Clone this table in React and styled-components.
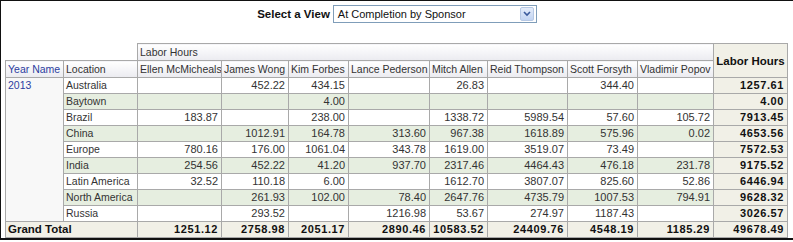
import React from "react";
import styled, { createGlobalStyle } from "styled-components";

const GlobalStyle = createGlobalStyle`
  body {
    margin: 0;
    background: #fff;
    font-family: "Liberation Sans", Arial, sans-serif;
  }
`;

const people = [
  "Ellen McMicheals",
  "James Wong",
  "Kim Forbes",
  "Lance Pederson",
  "Mitch Allen",
  "Reid Thompson",
  "Scott Forsyth",
  "Vladimir Popov",
];

const colWidths = [58, 74, 84, 67, 60, 81, 58, 80, 70, 76, 74];

const rows = [
  ["Australia", ["", "452.22", "434.15", "", "26.83", "", "344.40", ""], "1257.61"],
  ["Baytown", ["", "", "4.00", "", "", "", "", ""], "4.00"],
  ["Brazil", ["183.87", "", "238.00", "", "1338.72", "5989.54", "57.60", "105.72"], "7913.45"],
  ["China", ["", "1012.91", "164.78", "313.60", "967.38", "1618.89", "575.96", "0.02"], "4653.56"],
  ["Europe", ["780.16", "176.00", "1061.04", "343.78", "1619.00", "3519.07", "73.49", ""], "7572.53"],
  ["India", ["254.56", "452.22", "41.20", "937.70", "2317.46", "4464.43", "476.18", "231.78"], "9175.52"],
  ["Latin America", ["32.52", "110.18", "6.00", "", "1612.70", "3807.07", "825.60", "52.86"], "6446.94"],
  ["North America", ["", "261.93", "102.00", "78.40", "2647.76", "4735.79", "1007.53", "794.91"], "9628.32"],
  ["Russia", ["", "293.52", "", "1216.98", "53.67", "274.97", "1187.43", ""], "3026.57"],
];

const totals = ["1251.12", "2758.98", "2051.17", "2890.46", "10583.52", "24409.76", "4548.19", "1185.29", "49678.49"];

// outer frame
const Frame = styled.div`
  width: 788px;
  height: 237px;
  border-top: 1px solid #111;
  border-left: 1px solid #111;
  border-right: 2px solid #111;
  border-bottom: 2px solid #111;
  padding: 0 0 0 4px;
  box-sizing: content-box;
  display: flex;
  flex-direction: column;
`;

// select a view bar
const ViewBar = styled.div`
  display: flex;
  justify-content: center;
  align-items: center;
  gap: 3px;
  padding-top: 4px;
  height: 18px;
  margin-bottom: 20px;
  padding-right: 4px;
`;

const ViewLabel = styled.span`
  font-weight: 700;
  font-size: 11.5px;
  color: #111;
`;

const FakeSelect = styled.div`
  width: 196px;
  height: 16px;
  border: 1px solid #7f9db9;
  display: flex;
  align-items: center;
  justify-content: space-between;
  padding: 0 2px 0 4px;
  font-size: 11px;
  color: #111;
`;

const DropButton = styled.div`
  width: 12px;
  height: 12px;
  border: 1px solid #b6c8e4;
  border-radius: 2px;
  background: linear-gradient(#e4ecfa, #c2d4f2);
  display: flex;
  align-items: center;
  justify-content: center;
`;

const Table = styled.table`
  border-collapse: collapse;
  table-layout: fixed;
  width: 782px;
  font-size: 10.5px;
  color: #333;
`;

const Cell = styled.td`
  border: 1px solid #a9a9a9;
  padding: 0 3px 0 2px;
  height: 15px;
  line-height: 15px;
  white-space: nowrap;
  overflow: hidden;
  text-align: ${(p) => (p.$num ? "right" : "left")};
  vertical-align: ${(p) => (p.$top ? "top" : "middle")};
  font-size: ${(p) => (p.$big ? "11.5px" : p.$num ? "11px" : "10.5px")};
  font-weight: ${(p) => (p.$bold ? 700 : 400)};
  letter-spacing: ${(p) => (p.$bold && p.$num ? "0.6px" : "0")};
  color: ${(p) => (p.$blue ? "#2c3ea0" : p.$bold ? "#111" : "#333")};
  background: ${(p) =>
    p.$tone === "green"
      ? "#e6eee0"
      : p.$tone === "beige"
      ? "#f1f0e7"
      : p.$tone === "grey"
      ? "#f8f8f8"
      : "#fff"};
`;

const HeadCell = styled.th`
  border: 1px solid #a9a9a9;
  padding: 0 2px;
  height: 16px;
  line-height: 16px;
  white-space: nowrap;
  overflow: hidden;
  text-align: ${(p) => (p.$center ? "center" : "left")};
  font-weight: ${(p) => (p.$bold ? 700 : 400)};
  font-size: ${(p) => (p.$bold ? "11.5px" : "10.5px")};
  color: ${(p) => (p.$blue ? "#2c3ea0" : p.$bold ? "#111" : "#333")};
  background: ${(p) =>
    p.$beige ? "#f1f0e7" : "linear-gradient(#ffffff, #ebebf0)"};
`;

const BlankCell = styled.th`
  border: none;
  background: #fff;
`;

function Chevron() {
  return (
    <svg width="8" height="6" viewBox="0 0 8 6">
      <path d="M1 1 L4 4 L7 1" fill="none" stroke="#3a5a9c" strokeWidth="1.6" />
    </svg>
  );
}

export default function App() {
  return (
    <>
      <GlobalStyle />
      <Frame>
        <ViewBar>
          <ViewLabel>Select a View</ViewLabel>
          <FakeSelect>
            <span>At Completion by Sponsor</span>
            <DropButton>
              <Chevron />
            </DropButton>
          </FakeSelect>
        </ViewBar>

        <Table>
          <colgroup>
            {colWidths.map((w, i) => (
              <col key={i} style={{ width: w }} />
            ))}
          </colgroup>
          <thead>
            <tr>
              <BlankCell colSpan={2} />
              <HeadCell colSpan={8}>Labor Hours</HeadCell>
              <HeadCell rowSpan={2} $bold $beige $center>
                Labor Hours
              </HeadCell>
            </tr>
            <tr>
              <HeadCell $blue>Year Name</HeadCell>
              <HeadCell>Location</HeadCell>
              {people.map((p) => (
                <HeadCell key={p}>{p}</HeadCell>
              ))}
            </tr>
          </thead>
          <tbody>
            {rows.map(([loc, vals, total], i) => {
              const tone = i % 2 === 1 ? "green" : "white";
              return (
                <tr key={loc}>
                  {i === 0 && (
                    <Cell rowSpan={rows.length} $top $blue $tone="grey">
                      2013
                    </Cell>
                  )}
                  <Cell $tone={tone}>{loc}</Cell>
                  {vals.map((v, j) => (
                    <Cell key={j} $num $tone={tone}>
                      {v}
                    </Cell>
                  ))}
                  <Cell $num $bold $tone="beige">
                    {total}
                  </Cell>
                </tr>
              );
            })}
            <tr>
              <Cell colSpan={2} $bold $big $tone="beige">
                Grand Total
              </Cell>
              {totals.map((t, j) => (
                <Cell key={j} $num $bold $tone="beige">
                  {t}
                </Cell>
              ))}
            </tr>
          </tbody>
        </Table>
      </Frame>
    </>
  );
}
